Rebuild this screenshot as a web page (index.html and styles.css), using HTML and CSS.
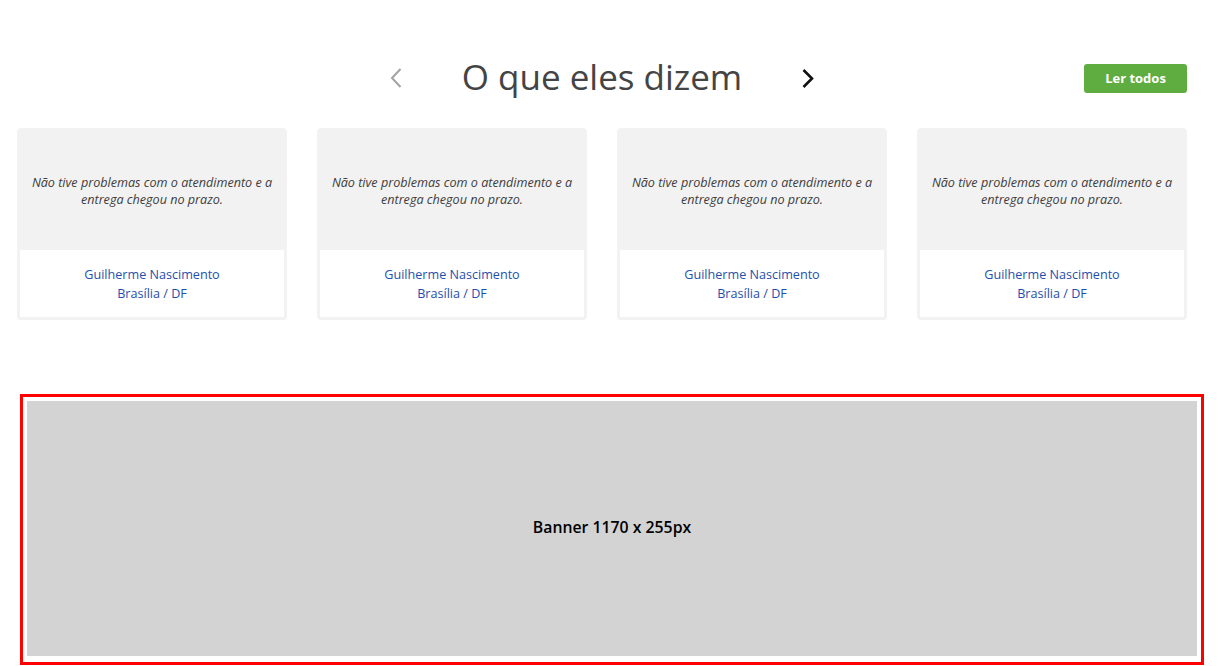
FILE: index.html
```html
<!DOCTYPE html>
<html lang="pt-BR">
<head>
<meta charset="utf-8">
<title>O que eles dizem</title>
<link rel="stylesheet" href="styles.css">
</head>
<body>
<section class="testimonials">
  <header class="t-head">
    <div class="t-nav">
      <button class="arrow arrow-prev" aria-label="Anterior">
        <svg width="12" height="20" viewBox="0 0 12 20"><path d="M10.5 1 L2 10 L10.5 19" fill="none" stroke="#a3a3a3" stroke-width="2"/></svg>
      </button>
      <h2 class="t-title">O que eles dizem</h2>
      <button class="arrow arrow-next" aria-label="Próximo">
        <svg width="12" height="19" viewBox="0 0 12 19"><path d="M1.5 1 L10 9.5 L1.5 18" fill="none" stroke="#111" stroke-width="2.6"/></svg>
      </button>
    </div>
    <a class="btn-all" href="#">Ler todos</a>
  </header>
  <div class="cards">
    <article class="card">
      <p class="quote">Não tive problemas com o atendimento e a entrega chegou no prazo.</p>
      <div class="author">Guilherme Nascimento<br>Brasília / DF</div>
    </article>
    <article class="card">
      <p class="quote">Não tive problemas com o atendimento e a entrega chegou no prazo.</p>
      <div class="author">Guilherme Nascimento<br>Brasília / DF</div>
    </article>
    <article class="card">
      <p class="quote">Não tive problemas com o atendimento e a entrega chegou no prazo.</p>
      <div class="author">Guilherme Nascimento<br>Brasília / DF</div>
    </article>
    <article class="card">
      <p class="quote">Não tive problemas com o atendimento e a entrega chegou no prazo.</p>
      <div class="author">Guilherme Nascimento<br>Brasília / DF</div>
    </article>
  </div>
</section>
<section class="banner-wrap">
  <div class="banner">Banner 1170 x 255px</div>
</section>
</body>
</html>
```

FILE: styles.css
```css
* { box-sizing: border-box; }
html, body { margin: 0; padding: 0; background: #fff; }
body {
  font-family: "Open Sans", "Liberation Sans", sans-serif;
  color: #444;
  overflow: hidden;
}
.testimonials {
  width: 1170px;
  margin-left: 17px;
  padding-top: 54px;
}
.t-head {
  position: relative;
  height: 46px;
  display: flex;
  justify-content: center;
  align-items: center;
}
.t-nav {
  display: flex;
  align-items: center;
}
.arrow {
  background: none;
  border: 0;
  padding: 0;
  margin: 0;
  display: flex;
  cursor: pointer;
}
.arrow-prev { margin-right: 60px; margin-top: 2px; }
.arrow-next { margin-left: 60px; margin-top: 2px; }
.t-title {
  margin: 0;
  font-size: 35px;
  font-weight: 400;
  color: #444;
  line-height: 46px;
}
.btn-all {
  position: absolute;
  right: 0;
  top: 10px;
  width: 103px;
  height: 29px;
  padding-bottom: 1px;
  background: #5fad41;
  color: #fff;
  border-radius: 3px;
  font-size: 13px;
  font-weight: 700;
  text-decoration: none;
  display: flex;
  align-items: center;
  justify-content: center;
}
.cards {
  display: grid;
  grid-template-columns: repeat(4, 270px);
  column-gap: 30px;
  margin-top: 28px;
}
.card {
  height: 192px;
  background: #f2f2f2;
  border: 3px solid #f2f2f2;
  border-radius: 4px;
  display: flex;
  flex-direction: column;
}
.quote {
  margin: 0;
  height: 119px;
  padding: 0 8px;
  display: flex;
  align-items: center;
  justify-content: center;
  text-align: center;
  font-size: 12.6px;
  font-style: italic;
  line-height: 17px;
  color: #3d3d3d;
}
.author {
  flex: 1;
  background: #fff;
  text-align: center;
  font-size: 12.6px;
  line-height: 19px;
  color: #1f4fae;
  padding-top: 15px;
}
.banner-wrap {
  margin: 74px 0 0 20px;
  width: 1184px;
  border: 3px solid #ff0000;
  padding: 4px 4px 6px;
}
.banner {
  height: 255px;
  padding-bottom: 3px;
  background: #d3d3d3;
  display: flex;
  align-items: center;
  justify-content: center;
  color: #000;
  font-size: 15.8px;
  font-weight: 600;
}
```
